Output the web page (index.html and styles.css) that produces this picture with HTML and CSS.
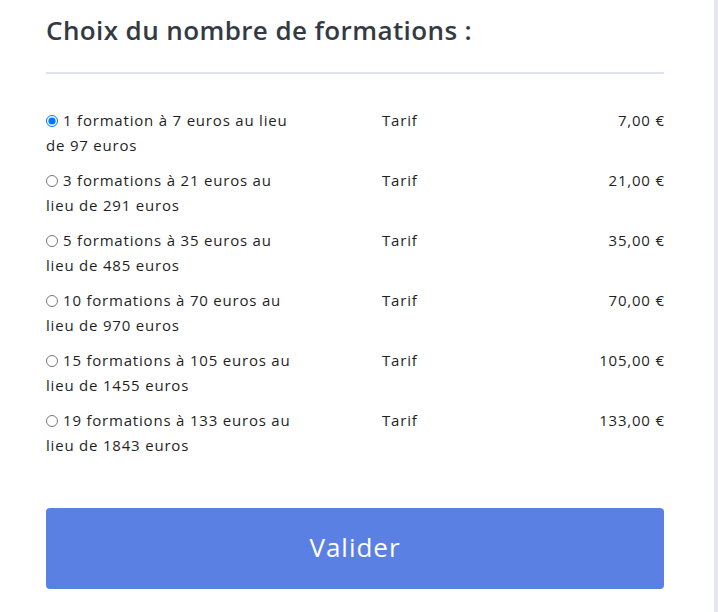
FILE: index.html
```
<!DOCTYPE html>
<html lang="fr">
<head>
    <meta charset="UTF-8">
    <meta name="viewport" content="width=device-width, initial-scale=1.0">
    <title>Choix du nombre de formations</title>
    <link rel="stylesheet" href="styles.css">
</head>
<body>
    <div class="panel">
        <h2 class="title">Choix du nombre de formations :</h2>
        <hr class="sep">

        <form class="offers">
            <div class="offer">
                <label class="offer-label"><input type="radio" name="nb" checked>1 formation à 7 euros au lieu<br>de 97 euros</label>
                <span class="offer-tarif">Tarif</span>
                <span class="offer-price">7,00 €</span>
            </div>
            <div class="offer">
                <label class="offer-label"><input type="radio" name="nb">3 formations à 21 euros au<br>lieu de 291 euros</label>
                <span class="offer-tarif">Tarif</span>
                <span class="offer-price">21,00 €</span>
            </div>
            <div class="offer">
                <label class="offer-label"><input type="radio" name="nb">5 formations à 35 euros au<br>lieu de 485 euros</label>
                <span class="offer-tarif">Tarif</span>
                <span class="offer-price">35,00 €</span>
            </div>
            <div class="offer">
                <label class="offer-label"><input type="radio" name="nb">10 formations à 70 euros au<br>lieu de 970 euros</label>
                <span class="offer-tarif">Tarif</span>
                <span class="offer-price">70,00 €</span>
            </div>
            <div class="offer">
                <label class="offer-label"><input type="radio" name="nb">15 formations à 105 euros au<br>lieu de 1455 euros</label>
                <span class="offer-tarif">Tarif</span>
                <span class="offer-price">105,00 €</span>
            </div>
            <div class="offer">
                <label class="offer-label"><input type="radio" name="nb">19 formations à 133 euros au<br>lieu de 1843 euros</label>
                <span class="offer-tarif">Tarif</span>
                <span class="offer-price">133,00 €</span>
            </div>

            <button type="button" class="btn-valider">Valider</button>
        </form>
    </div>
</body>
</html>
```

FILE: styles.css
```
body {
    margin: 0;
    background-color: #e4e7ed;
    font-family: 'Open Sans', sans-serif;
    color: #1f1f1f;
}

.panel {
    width: 714px;
    height: 612px;
    background-color: #ffffff;
    box-sizing: border-box;
    padding: 0 50px 0 46px;
    overflow: hidden;
}

.title {
    margin: 0;
    padding-top: 12px;
    font-size: 26px;
    font-weight: 600;
    line-height: 36px;
    color: #343a44;
    letter-spacing: 0.4px;
}

.sep {
    margin: 24px 0 34px;
    border: 0;
    border-top: 2px solid #dfe3ed;
}

.offers {
    display: flex;
    flex-direction: column;
    gap: 10px;
}

.offer {
    display: grid;
    grid-template-columns: 336px 1fr auto;
    font-size: 15px;
    line-height: 25px;
    letter-spacing: 0.8px;
}

.offer-label input {
    width: 12px;
    height: 12px;
    margin: 0 5px 0 0;
    vertical-align: -1px;
}

.offer-price {
    text-align: right;
    margin-right: -0.8px;
}

.btn-valider {
    margin-top: 40px;
    height: 81px;
    padding-bottom: 4px;
    border: 0;
    border-radius: 4px;
    background-color: #5b80e4;
    color: #ffffff;
    font-family: 'Open Sans', sans-serif;
    font-size: 26px;
    letter-spacing: 1px;
}
```
